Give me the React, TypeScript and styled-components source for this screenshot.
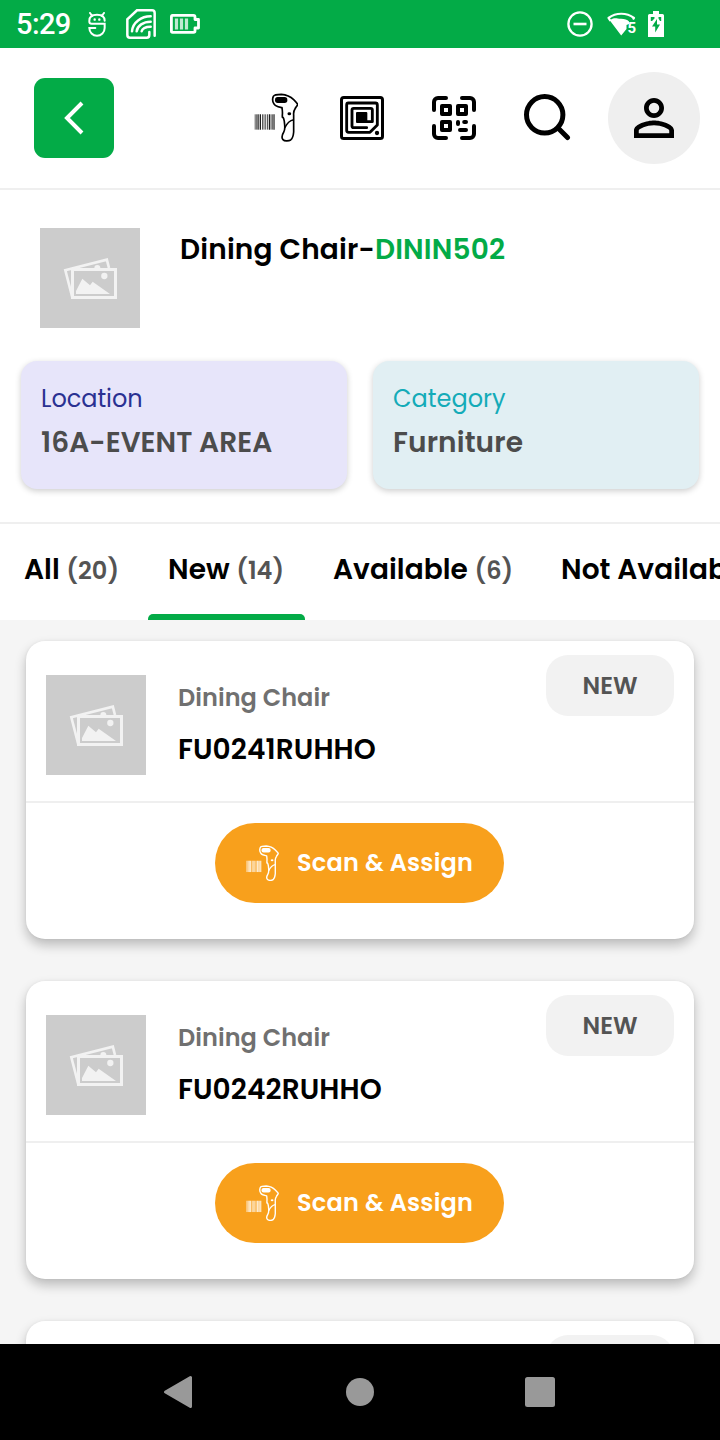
import React from 'react';
import styled, { createGlobalStyle } from 'styled-components';
import { MdPersonOutline } from 'react-icons/md';

const GlobalStyle = createGlobalStyle`
  * { box-sizing: border-box; }
  body { margin: 0; background: #fff; font-family: Poppins, Inter, "Liberation Sans", sans-serif; }
  button { font: inherit; border: 0; padding: 0; color: inherit; }
  svg { display: block; flex: none; }
`;

const Screen = styled.div`
  width: 720px;
  height: 1440px;
  display: flex;
  flex-direction: column;
  overflow: hidden;
  background: #fff;
`;

const StatusBar = styled.div`
  height: 48px;
  flex: none;
  display: flex;
  justify-content: space-between;
  padding: 0 56px 0 16px;
  background: #03ab47;
  color: #fff;
`;

const StatusGroup = styled.div<{ $gap: number }>`
  display: flex;
  align-items: center;
  gap: ${(p) => p.$gap}px;
`;

const Clock = styled.span`
  width: 56px;
  font: 500 29px/50px Roboto, sans-serif;
  letter-spacing: -0.6px;
`;

const Header = styled.header`
  height: 142px;
  flex: none;
  display: flex;
  align-items: center;
  padding: 0 20px 0 34px;
  border-bottom: 2px solid #efefef;
`;

const BackButton = styled.button`
  width: 80px;
  height: 80px;
  border-radius: 11px;
  background: #03ab47;
  display: grid;
  place-items: center;
`;

const Actions = styled.div`
  flex: 1;
  display: flex;
  align-items: center;
  justify-content: flex-end;
`;

const IconButton = styled.button<{ $w: number; $gap: number }>`
  width: ${(p) => p.$w}px;
  margin-right: ${(p) => p.$gap}px;
  background: none;
`;

const Avatar = styled.button`
  width: 92px;
  height: 92px;
  border-radius: 50%;
  background: #efefef;
  display: grid;
  place-items: center;
`;

const Product = styled.section`
  height: 334px;
  flex: none;
  padding: 38px 20px 0;
  border-bottom: 2px solid #efefef;
`;

const ProductRow = styled.div`
  display: flex;
  gap: 40px;
  padding-left: 20px;
`;

const ProductTitle = styled.div`
  padding-top: 1px;
`;

const Thumb = styled.div`
  width: 100px;
  height: 100px;
  flex: none;
  background: #ccc;
`;

const Label = styled.span<{ $size: number; $weight: number; $color: string; $track?: number }>`
  font-size: ${(p) => p.$size}px;
  font-weight: ${(p) => p.$weight};
  color: ${(p) => p.$color};
  letter-spacing: ${(p) => p.$track ?? 0}px;
  line-height: 42px;
  white-space: nowrap;
`;

const Facts = styled.div`
  display: grid;
  grid-template-columns: 1fr 1fr;
  gap: 25.4px;
  margin: 32.7px 0.7px 0;
`;

const Fact = styled.div<{ $bg: string }>`
  height: 128px;
  border-radius: 16px;
  padding: 17px 20.4px;
  display: flex;
  flex-direction: column;
  gap: 2px;
  background: ${(p) => p.$bg};
  box-shadow: 0 2px 6px rgba(0, 0, 0, 0.2);
`;

const Tabs = styled.nav`
  height: 96px;
  flex: none;
  display: flex;
  padding-left: 4px;
  overflow: hidden;
`;

const Tab = styled.div<{ $w: number; $gap: number; $active?: boolean }>`
  width: ${(p) => p.$w}px;
  margin-right: ${(p) => p.$gap}px;
  flex: none;
  display: flex;
  flex-direction: column;
  justify-content: space-between;
  padding-top: 25px;

  &::after {
    content: '';
    height: 6px;
    border-radius: 5px 5px 0 0;
    background: ${(p) => (p.$active ? '#03ab47' : 'transparent')};
  }
`;

const TabText = styled.div`
  display: flex;
  align-items: baseline;
  gap: 6.5px;
  padding-left: 20px;
`;

const List = styled.main`
  flex: 1;
  min-height: 0;
  overflow: hidden;
  padding: 21px 26px 0;
  display: flex;
  flex-direction: column;
  gap: 42px;
  background: #f5f5f5;
`;

const Card = styled.article`
  height: 298px;
  flex: none;
  border-radius: 19px;
  background: #fff;
  box-shadow: 0 6px 12px rgba(0, 0, 0, 0.24), 0 0 3px rgba(0, 0, 0, 0.06);
`;

const CardTop = styled.div`
  height: 162px;
  display: flex;
  border-bottom: 2px solid #efefef;
  padding: 14px 20px 0;
`;

const CardThumb = styled(Thumb)`
  margin-top: 20px;
`;

const CardText = styled.div`
  flex: 1;
  display: flex;
  flex-direction: column;
  gap: 10px;
  padding: 22px 0 0 32px;
`;

const Badge = styled.div`
  width: 128px;
  height: 61px;
  border-radius: 22px;
  background: #f2f2f2;
  display: grid;
  place-items: center;
`;

const CardBottom = styled.div`
  padding-top: 20px;
  display: flex;
  justify-content: center;
`;

const ScanButton = styled.button`
  width: 289px;
  height: 80px;
  border-radius: 40px;
  display: flex;
  align-items: center;
  gap: 18px;
  padding-left: 31px;
  background: #f8a01c;
  color: #fff;
  margin-right: 1px;
`;

const NavBar = styled.footer`
  height: 96px;
  flex: none;
  display: flex;
  align-items: center;
  justify-content: space-between;
  padding: 0 165px 0 163px;
  background: #000;
  color: #999;
`;

const ScannerIcon = ({ w, h, bold = 0 }: { w: number; h: number; bold?: number }) => (
  <svg width={w} height={h} viewBox="40 40 134 148" fill="none" stroke="currentColor">
    <path strokeWidth={2 + bold} d="M43.500 104V150M48 104V150M51.500 104V150M54 104V150M65.500 104V150M70 104V150M75 104V150M80.500 104V150M91 104V150M95 104V150" />
    <path strokeWidth={3.2 + bold} d="M59 104V150M86 104V150M100 104V150" />
    <path strokeWidth={5 + bold} strokeLinejoin="round" d="M100 73C96 67 95 57 98 50C101 44 109 44 122 44C137 45 151 52 159 60C164 65 169 70 171 74C170 79 166 81 164 86C160 92 158 98 159 106L159 157C158 169 155 177 150 181C144 185 131 185 127 180C122 174 124 166 129 158C135 149 132 138 131 126C130 121 130 117 127 113H125V106C126 98 125 91 124 84C115 82 104 81 100 73Z" />
    <path strokeWidth={4.6 + bold} d="M159 120C146 122 138 132 132 145" />
    <rect x="103" y="52" width="37" height="18" rx="8" fill="currentColor" stroke="none" />
    <ellipse cx="146" cy="102" rx="5.500" ry="4.500" fill="currentColor" stroke="none" />
  </svg>
);

const RfidIcon = () => (
  <svg width="44" height="44" viewBox="0 0 132 132" fill="none" stroke="currentColor" strokeLinejoin="round" strokeLinecap="round">
    <rect x="4.500" y="4.500" width="123" height="123" rx="7" strokeWidth="9" />
    <path strokeWidth="8.500" d="M25 21H106Q112 21 112 27V87L90 109H26Q20 109 20 103V27Q20 21 25 21Z" />
    <path strokeWidth="8.500" d="M80 95H41Q36 95 36 90V42Q36 37 41 37H92Q97 37 97 42V77H80" />
    <rect x="48" y="48" width="34" height="33" rx="3" fill="currentColor" stroke="none" />
    <circle cx="111" cy="111" r="6.500" fill="currentColor" stroke="none" />
  </svg>
);

const QrIcon = () => (
  <svg width="44" height="44" viewBox="0 0 44 44" fill="none" stroke="currentColor" strokeWidth="4" strokeLinecap="round" strokeLinejoin="round">
    <path d="M2 14V6a4 4 0 0 1 4-4h8M30 2h8a4 4 0 0 1 4 4v8M42 30v8a4 4 0 0 1-4 4h-8M14 42H6a4 4 0 0 1-4-4v-8" />
    <path d="M10 10h8v8h-8zM26 10h8v8h-8zM10 26h8v8h-8zM26 26v2M32.200 26H34M28 34h6" />
  </svg>
);

const SearchIcon = () => (
  <svg width="48" height="48" viewBox="0 0 48 48" fill="none" stroke="currentColor" strokeWidth="5" strokeLinecap="round">
    <circle cx="21.700" cy="20.800" r="18.200" />
    <path d="M35 34L44.500 43.500" />
  </svg>
);

const Pictures = () => (
  <svg width="100" height="100" viewBox="0 0 300 300" fill="none" stroke="#f2f2f2">
    <path strokeWidth="8" d="M207 120L200.500 95L76 127L97 208" />
    <path fill="#f2f2f2" stroke="none" d="M163 120a9 9 0 0 1 18 0z" />
    <rect x="97.500" y="124.500" width="129" height="84" strokeWidth="9" fill="#ccc" />
    <path fill="#f2f2f2" stroke="none" d="M108 198V189L127 152L150 172L158 161L210 198Z" />
    <circle cx="193" cy="144" r="9.500" fill="#f2f2f2" stroke="none" />
  </svg>
);

const RobotIcon = () => (
  <svg width="18" height="25" viewBox="0 0 54 75" fill="none" stroke="currentColor" strokeWidth="6" strokeLinecap="round">
    <path d="M50 26C50 14 40 8 27 8S4 14 4 26V29Q4 35 11 35H50V48A23 23 0 0 1 4 48H22M6 3L13 12M48 3L41 12" />
    <path strokeWidth="7" d="M20 22V23M34 22V23" />
  </svg>
);

const CardReaderIcon = () => (
  <svg width="30" height="30" viewBox="0 0 90 90" fill="none" stroke="currentColor" strokeWidth="7.500" strokeLinecap="round">
    <path d="M86 80V12Q86 4 78 4H33L4 31V78Q4 86 12 86H62Q70 86 70 78V69" />
    <path d="M18 67C20 40 46 22 74 22M32 67C34 50 52 38 74 38M47 67C49 58 60 53 74 53" />
  </svg>
);

const BatteryIcon = () => (
  <svg width="30" height="20" viewBox="0 0 30 20" fill="none" stroke="currentColor">
    <path strokeWidth="2.800" strokeLinejoin="round" d="M2.500 1.400H23.500Q25 1.400 25 3V5.500H28.500V14H25V17Q25 18.400 23.500 18.400H2.500Q1.400 18.400 1.400 17V3Q1.400 1.400 2.500 1.400Z" />
    <path strokeWidth="3.200" strokeOpacity=".75" d="M6.500 4.500V15.500M11.500 4.500V15.500M16.500 4.500V15.500" />
  </svg>
);

const DndIcon = () => (
  <svg width="26" height="26" viewBox="0 0 26 26" fill="none" stroke="currentColor">
    <circle cx="13" cy="13" r="11.600" strokeWidth="2.300" />
    <path strokeWidth="2.600" d="M6.500 13H19.500" />
  </svg>
);

const WifiFive = styled.div`
  display: flex;
  align-items: flex-end;
  height: 24px;
`;

const WifiDigit = styled.span`
  font: 700 15px/15px Roboto, sans-serif;
  margin: 0 -1px 0 -8.5px;
`;

const WifiIcon = () => (
  <svg width="29" height="24" viewBox="0 0 29 24" fill="none" stroke="currentColor">
    <path strokeWidth="2.200" strokeLinejoin="round" d="M3.500 9L1.500 6C9 .3 19.500 .3 27 6L26 7.500" />
    <path fill="currentColor" stroke="none" d="M2.500 8C9 5 9 6.800 14 6.800Q19.500 6.800 22 9.500V12L19.500 13V17L14.200 23.500Z" />
  </svg>
);

const ChargingIcon = () => (
  <svg width="16" height="26" viewBox="0 0 16 26">
    <path fill="currentColor" d="M5 0H11V3H14.500Q16 3 16 4.500V26H0V4.500Q0 3 1.500 3H5Z" />
    <path fill="#03ab47" d="M9 8L4 15.500H7.200V21.500L12 13.500H9ZM2.800 6H6.500V7.500L4 10H2.800ZM10.500 6H13.200V10H12L10.500 7.500Z" />
  </svg>
);

const tabs = [
  { name: 'All', count: 20, w: 135, gap: 9 },
  { name: 'New', count: 14, w: 157, gap: 8, active: true },
  { name: 'Available', count: 6, w: 219, gap: 9 },
  { name: 'Not Available', count: 0, w: 280, gap: 0 },
];

const assets = ['FU0241RUHHO', 'FU0242RUHHO', 'FU0243RUHHO'];

export default function App() {
  return (
    <>
      <GlobalStyle />
      <Screen>
        <StatusBar>
          <StatusGroup $gap={20}>
            <StatusGroup $gap={16}>
              <Clock>5:29</Clock>
              <RobotIcon />
            </StatusGroup>
            <StatusGroup $gap={14}>
              <CardReaderIcon />
              <BatteryIcon />
            </StatusGroup>
          </StatusGroup>
          <StatusGroup $gap={14}>
            <DndIcon />
            <StatusGroup $gap={13}>
              <WifiFive>
                <WifiIcon />
                <WifiDigit>5</WifiDigit>
              </WifiFive>
              <ChargingIcon />
            </StatusGroup>
          </StatusGroup>
        </StatusBar>

        <Header>
          <BackButton aria-label="Back">
            <svg width="22" height="34" viewBox="0 0 22 34" fill="none" stroke="#fff" strokeWidth="4">
              <path d="M19 2L4 17L19 32" />
            </svg>
          </BackButton>
          <Actions>
            <IconButton $w={45} $gap={41.3} aria-label="Barcode scanner">
              <ScannerIcon w={44.7} h={49.3} />
            </IconButton>
            <IconButton $w={44} $gap={48} aria-label="RFID"><RfidIcon /></IconButton>
            <IconButton $w={44} $gap={47} aria-label="QR code"><QrIcon /></IconButton>
            <IconButton $w={48} $gap={37} aria-label="Search"><SearchIcon /></IconButton>
            <Avatar aria-label="Profile"><MdPersonOutline size={60} /></Avatar>
          </Actions>
        </Header>

        <Product>
          <ProductRow>
            <Thumb><Pictures /></Thumb>
            <ProductTitle>
              <Label $size={28} $weight={600} $color="#000" $track={0.17}>Dining Chair-</Label>
              <Label $size={28} $weight={600} $color="#03ab47" $track={0.15}>DININ502</Label>
            </ProductTitle>
          </ProductRow>
          <Facts>
            <Fact $bg="#e7e5fa">
              <Label $size={24} $weight={400} $color="#2a3192" $track={-0.05}>Location</Label>
              <Label $size={28} $weight={600} $color="#4c4c4c" $track={0.05}>16A-EVENT AREA</Label>
            </Fact>
            <Fact $bg="#e1eff3">
              <Label $size={24} $weight={400} $color="#14abb8">Category</Label>
              <Label $size={28} $weight={600} $color="#4c4c4c" $track={0.12}>Furniture</Label>
            </Fact>
          </Facts>
        </Product>

        <Tabs>
          {tabs.map((t) => (
            <Tab key={t.name} $w={t.w} $gap={t.gap} $active={t.active}>
              <TabText>
                <Label $size={28} $weight={600} $color="#000" $track={0.06}>{t.name}</Label>
                <Label $size={24} $weight={600} $color="#545454" $track={0.05}>({t.count})</Label>
              </TabText>
            </Tab>
          ))}
        </Tabs>

        <List>
          {assets.map((code) => (
            <Card key={code}>
              <CardTop>
                <CardThumb><Pictures /></CardThumb>
                <CardText>
                  <Label $size={24} $weight={600} $color="#707070" $track={0.06}>Dining Chair</Label>
                  <Label $size={28} $weight={600} $color="#000" $track={0.1}>{code}</Label>
                </CardText>
                <Badge>
                  <Label $size={24} $weight={600} $color="#545454">NEW</Label>
                </Badge>
              </CardTop>
              <CardBottom>
                <ScanButton>
                  <ScannerIcon w={33} h={36.4} bold={0.6} />
                  <Label $size={24} $weight={600} $color="#fff" $track={0.2}>Scan &amp; Assign</Label>
                </ScanButton>
              </CardBottom>
            </Card>
          ))}
        </List>

        <NavBar>
          <svg width="30" height="34" viewBox="0 0 30 34"><path fill="currentColor" stroke="currentColor" strokeWidth="3" strokeLinejoin="round" d="M2.500 17L27.500 2.500V31.500Z" /></svg>
          <svg width="30" height="28" viewBox="0 0 30 28"><circle cx="16" cy="14" r="14" fill="currentColor" /></svg>
          <svg width="30" height="30" viewBox="0 0 30 30"><rect width="30" height="30" rx="2.500" fill="currentColor" /></svg>
        </NavBar>
      </Screen>
    </>
  );
}
